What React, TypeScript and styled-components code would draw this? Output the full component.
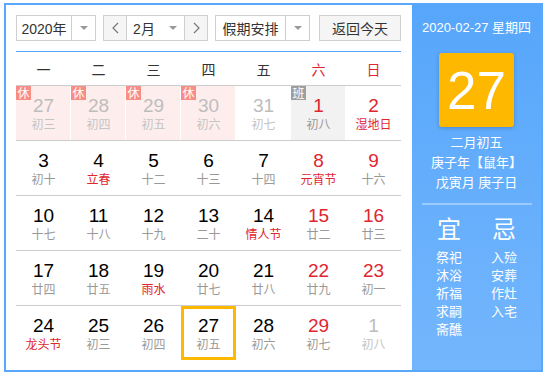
import styled, { createGlobalStyle, css } from "styled-components";

const GlobalStyle = createGlobalStyle`
    body {
        margin: 0;
        background: #fff;
        font-family: "Liberation Sans", "Noto Sans CJK SC", sans-serif;
    }
`

const Frame = styled.div`
    margin: 3px 0 0 4px;
    width: 539px;
    height: 369px;
    box-sizing: border-box;
    border: 2px solid #5aa8fb;
    display: flex;
`

const Left = styled.div`
    width: 406px;
    box-sizing: border-box;
    padding: 10px 11px 0 10px;
`

const Toolbar = styled.div`
    display: flex;
    height: 26px;
`

const SelectBox = styled.div<{ $w: number; $ml?: number }>`
    display: flex;
    width: ${p => p.$w}px;
    margin-left: ${p => p.$ml ?? 0}px;
    box-sizing: border-box;
    border: 1px solid #cfcfcf;
    background: #fff;
`

const SelectText = styled.div`
    flex: 1;
    display: flex;
    align-items: center;
    justify-content: center;
    font-size: 14px;
    color: #333;
`

const Arrow = styled.div<{ $line?: boolean }>`
    width: 23px;
    display: flex;
    align-items: center;
    justify-content: center;
    border-left: ${p => (p.$line ? "1px solid #cfcfcf" : "none")};
    &::after {
        content: "";
        border-left: 4px solid transparent;
        border-right: 4px solid transparent;
        border-top: 4px solid #999;
    }
`

const NavBtn = styled.div<{ $side: "l" | "r" }>`
    width: 22px;
    display: flex;
    align-items: center;
    justify-content: center;
    background: #f5f5f5;
    ${p => p.$side === "l" ? css`border-right: 1px solid #cfcfcf;` : css`border-left: 1px solid #cfcfcf;`}
`

const TodayBtn = styled.div`
    width: 82px;
    margin-left: 9px;
    box-sizing: border-box;
    border: 1px solid #cfcfcf;
    background: #f5f5f5;
    display: flex;
    align-items: center;
    justify-content: center;
    font-size: 14px;
    color: #333;
`

const BlueLine = styled.div`
    margin-top: 10px;
    height: 1px;
    background: #5aa8fb;
`

const WeekRow = styled.div`
    display: grid;
    grid-template-columns: repeat(7, 55px);
    height: 33px;
`

const WeekDay = styled.div<{ $red?: boolean }>`
    display: flex;
    align-items: center;
    justify-content: center;
    font-size: 14px;
    color: ${p => (p.$red ? "#e0262f" : "#333")};
`

const Grid = styled.div`
    border-top: 1px solid #cccccc;
`

const Row = styled.div`
    display: grid;
    grid-template-columns: repeat(7, 55px);
    border-bottom: 1px solid #cccccc;
    &:last-child {
        border-bottom: none;
    }
`

const Cell = styled.div<{ $bg: string; $today?: boolean }>`
    position: relative;
    height: 54px;
    box-sizing: border-box;
    padding-top: 9px;
    text-align: center;
    background: ${p => p.$bg};
    box-shadow: ${p => (p.$today ? "inset 0 0 0 3px #ffb800" : p.$bg !== "#fff" ? "inset -1px 0 0 #fff" : "none")};
`

const Num = styled.div<{ $color: string }>`
    font-size: 19px;
    line-height: 22px;
    color: ${p => p.$color};
`

const Lunar = styled.div<{ $color: string }>`
    margin-top: -1px;
    font-size: 12px;
    line-height: 16px;
    font-family: "Noto Sans CJK SC", sans-serif;
    color: ${p => p.$color};
`

const Badge = styled.div<{ $bg: string }>`
    position: absolute;
    left: 0;
    top: 0;
    width: 15px;
    height: 14px;
    background: ${p => p.$bg};
    color: #fff;
    font-size: 12px;
    line-height: 14px;
    text-align: center;
    font-family: "Noto Sans CJK SC", sans-serif;
`

const Panel = styled.div`
    flex: 1;
    background: linear-gradient(180deg, #56a6fb 0%, #74b6fd 100%);
    color: #fff;
    display: flex;
    flex-direction: column;
    align-items: center;
    padding-top: 13px;
`

const DateLine = styled.div`
    font-size: 13px;
    line-height: 20px;
`

const BigDay = styled.div`
    margin-top: 15px;
    width: 75px;
    height: 74px;
    border-radius: 3px;
    background: #ffb800;
    box-shadow: 0 1px 4px rgba(0, 0, 0, 0.2);
    display: flex;
    align-items: center;
    justify-content: center;
    font-size: 53px;
`

const LunarInfo = styled.div`
    margin-top: 6px;
    font-size: 13px;
    line-height: 20px;
    text-align: center;
`

const Divider = styled.div`
    margin-top: 10px;
    width: 110px;
    height: 2px;
    background: rgba(255, 255, 255, 0.35);
`

const YiJi = styled.div`
    margin-top: 10px;
    display: grid;
    grid-template-columns: 55px 55px;
    text-align: center;
`

const YiJiHead = styled.div`
    font-size: 24px;
    line-height: 30px;
`

const YiJiList = styled.div`
    margin-top: 4px;
    font-size: 13px;
    line-height: 18px;
`

const Chevron = ({ dir }: { dir: "l" | "r" }) => (
    <svg width="7" height="12" viewBox="0 0 7 12">
        <polyline
            points={dir === "l" ? "6,1 1,6 6,11" : "1,1 6,6 1,11"}
            fill="none"
            stroke="#777"
            strokeWidth="1.2"
        />
    </svg>
)

type Day = {
    d: number;
    l: string;
    other?: boolean;
    red?: boolean;
    fest?: boolean;
    badge?: "休" | "班";
    today?: boolean;
}

const rows: Day[][] = [
    [
        { d: 27, l: "初三", other: true, badge: "休" },
        { d: 28, l: "初四", other: true, badge: "休" },
        { d: 29, l: "初五", other: true, badge: "休" },
        { d: 30, l: "初六", other: true, badge: "休" },
        { d: 31, l: "初七", other: true },
        { d: 1, l: "初八", red: true, badge: "班" },
        { d: 2, l: "湿地日", red: true, fest: true },
    ],
    [
        { d: 3, l: "初十" },
        { d: 4, l: "立春", fest: true },
        { d: 5, l: "十二" },
        { d: 6, l: "十三" },
        { d: 7, l: "十四" },
        { d: 8, l: "元宵节", red: true, fest: true },
        { d: 9, l: "十六", red: true },
    ],
    [
        { d: 10, l: "十七" },
        { d: 11, l: "十八" },
        { d: 12, l: "十九" },
        { d: 13, l: "二十" },
        { d: 14, l: "情人节", fest: true },
        { d: 15, l: "廿二", red: true },
        { d: 16, l: "廿三", red: true },
    ],
    [
        { d: 17, l: "廿四" },
        { d: 18, l: "廿五" },
        { d: 19, l: "雨水", fest: true },
        { d: 20, l: "廿七" },
        { d: 21, l: "廿八" },
        { d: 22, l: "廿九", red: true },
        { d: 23, l: "初一", red: true },
    ],
    [
        { d: 24, l: "龙头节", fest: true },
        { d: 25, l: "初三" },
        { d: 26, l: "初四" },
        { d: 27, l: "初五", today: true },
        { d: 28, l: "初六" },
        { d: 29, l: "初七", red: true },
        { d: 1, l: "初八", other: true },
    ],
]

const weekdays = ["一", "二", "三", "四", "五", "六", "日"]

const cellBg = (day: Day) => {
    if (day.badge === "休") return "#fdeeed"
    if (day.badge === "班") return "#f2f2f2"
    return "#fff"
}

const numColor = (day: Day) => (day.other ? "#bdbdbd" : day.red ? "#e0262f" : "#000")
const lunarColor = (day: Day) => (day.other ? "#c4c4c4" : day.fest ? "#e0262f" : "#999")

const App = () => {
    return (
        <>
            <GlobalStyle />
            <Frame>
                <Left>
                    <Toolbar>
                        <SelectBox $w={80}>
                            <SelectText>2020年</SelectText>
                            <Arrow $line />
                        </SelectBox>
                        <SelectBox $w={105} $ml={7}>
                            <NavBtn $side="l"><Chevron dir="l" /></NavBtn>
                            <SelectText>2月</SelectText>
                            <Arrow />
                            <NavBtn $side="r"><Chevron dir="r" /></NavBtn>
                        </SelectBox>
                        <SelectBox $w={95} $ml={7}>
                            <SelectText>假期安排</SelectText>
                            <Arrow $line />
                        </SelectBox>
                        <TodayBtn>返回今天</TodayBtn>
                    </Toolbar>
                    <BlueLine />
                    <WeekRow>
                        {weekdays.map((w, i) => (
                            <WeekDay key={w} $red={i > 4}>{w}</WeekDay>
                        ))}
                    </WeekRow>
                    <Grid>
                        {rows.map((row, ri) => (
                            <Row key={ri}>
                                {row.map((day, ci) => (
                                    <Cell key={ci} $bg={cellBg(day)} $today={day.today}>
                                        {day.badge && (
                                            <Badge $bg={day.badge === "休" ? "#f88d85" : "#9e9e9e"}>{day.badge}</Badge>
                                        )}
                                        <Num $color={numColor(day)}>{day.d}</Num>
                                        <Lunar $color={lunarColor(day)}>{day.l}</Lunar>
                                    </Cell>
                                ))}
                            </Row>
                        ))}
                    </Grid>
                </Left>
                <Panel>
                    <DateLine>2020-02-27 星期四</DateLine>
                    <BigDay>27</BigDay>
                    <LunarInfo>
                        二月初五<br />
                        庚子年【鼠年】<br />
                        戊寅月 庚子日
                    </LunarInfo>
                    <Divider />
                    <YiJi>
                        <YiJiHead>宜</YiJiHead>
                        <YiJiHead>忌</YiJiHead>
                        <YiJiList>祭祀<br />沐浴<br />祈福<br />求嗣<br />斋醮</YiJiList>
                        <YiJiList>入殓<br />安葬<br />作灶<br />入宅</YiJiList>
                    </YiJi>
                </Panel>
            </Frame>
        </>
    )
}

export default App;
